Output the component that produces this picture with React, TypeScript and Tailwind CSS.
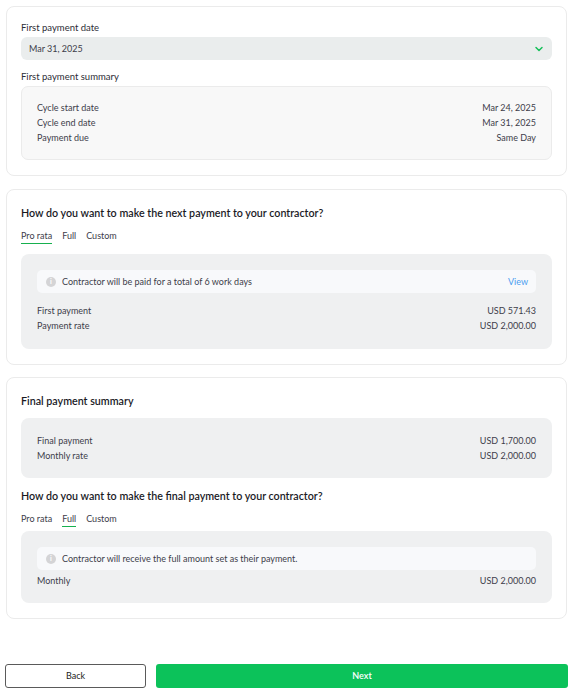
import React from "react";

const font = { fontFamily: "Lato, 'Noto Sans', sans-serif" };

function Row({ label, value }: { label: string; value: string }) {
  return (
    <div className="flex h-[15px] items-center justify-between text-[9px] text-[#3d3d4a]">
      <span>{label}</span>
      <span>{value}</span>
    </div>
  );
}

function InfoIcon() {
  return (
    <span className="flex h-[10px] w-[10px] items-center justify-center rounded-full bg-[#d4d4d6] text-[7px] font-bold leading-none text-white">
      i
    </span>
  );
}

function Tabs({ active }: { active: number }) {
  const tabs = ["Pro rata", "Full", "Custom"];
  return (
    <div className="flex gap-[10px] text-[9px] text-[#3d3d4a]">
      {tabs.map((t, i) => (
        <span
          key={t}
          className={
            i === active
              ? "h-[15px] border-b-[1.5px] border-[#16b04e] leading-[13px]"
              : "h-[15px] border-b-[1.5px] border-transparent leading-[13px]"
          }
        >
          {t}
        </span>
      ))}
    </div>
  );
}

export default function App() {
  return (
    <div className="min-h-[697px] bg-white pb-[9px] pl-[6px] pr-[12px] pt-[6px]" style={font}>
      {/* Card 1 */}
      <div className="rounded-[8px] border border-[#ebebeb] px-[14px] pb-[15px] pt-[14px]">
        <div className="h-[14px] text-[9.5px] leading-[14px] text-[#2d2d36]">First payment date</div>
        <div className="mt-[2px] flex h-[23px] items-center justify-between rounded-[6px] bg-[#eaeded] pl-[8px] pr-[8px] text-[9px] text-[#3d3d4a]">
          <span>Mar 31, 2025</span>
          <svg width="10" height="8" viewBox="0 0 10 8">
            <path d="M2 2.5 L5 5.5 L8 2.5" fill="none" stroke="#16c05a" strokeWidth="1.5" strokeLinecap="round" strokeLinejoin="round" />
          </svg>
        </div>
        <div className="mt-[10px] h-[14px] text-[9.5px] leading-[14px] text-[#2d2d36]">First payment summary</div>
        <div className="mt-[2px] rounded-[7px] border border-[#ebebeb] bg-[#f8f8f8] px-[15px] py-[13.5px]">
          <Row label="Cycle start date" value="Mar 24, 2025" />
          <Row label="Cycle end date" value="Mar 31, 2025" />
          <Row label="Payment due" value="Same Day" />
        </div>
      </div>

      {/* Card 2 */}
      <div className="mt-[13px] rounded-[8px] border border-[#ebebeb] px-[14px] pb-[15px] pt-[15px]">
        <div className="h-[16px] text-[10.7px] font-semibold leading-[16px] text-[#1a1a1f]">
          How do you want to make the next payment to your contractor?
        </div>
        <div className="mt-[8px]">
          <Tabs active={0} />
        </div>
        <div className="mt-[10px] rounded-[8px] bg-[#eff0f1] px-[16px] pb-[16px] pt-[16px]">
          <div className="flex h-[23px] items-center justify-between rounded-[5px] bg-[#f8f9fb] pl-[9px] pr-[8px] text-[9px] text-[#3d3d4a]">
            <div className="flex items-center gap-[6px]">
              <InfoIcon />
              <span>Contractor will be paid for a total of 6 work days</span>
            </div>
            <span className="text-[#4a9df0]">View</span>
          </div>
          <div className="mt-[10px]">
            <Row label="First payment" value="USD 571.43" />
            <Row label="Payment rate" value="USD 2,000.00" />
          </div>
        </div>
      </div>

      {/* Card 3 */}
      <div className="mt-[12px] rounded-[8px] border border-[#ebebeb] px-[14px] pb-[15px] pt-[15px]">
        <div className="h-[16px] text-[10.7px] font-semibold leading-[16px] text-[#1a1a1f]">Final payment summary</div>
        <div className="mt-[9px] rounded-[8px] bg-[#eff0f1] px-[16px] py-[15px]">
          <Row label="Final payment" value="USD 1,700.00" />
          <Row label="Monthly rate" value="USD 2,000.00" />
        </div>
        <div className="mt-[10px] h-[16px] text-[10.7px] font-semibold leading-[16px] text-[#1a1a1f]">
          How do you want to make the final payment to your contractor?
        </div>
        <div className="mt-[8px]">
          <Tabs active={1} />
        </div>
        <div className="mt-[4px] rounded-[8px] bg-[#eff0f1] px-[16px] pb-[15px] pt-[16px]">
          <div className="flex h-[23px] items-center rounded-[5px] bg-[#f8f9fb] pl-[9px] pr-[8px] text-[9px] text-[#3d3d4a]">
            <div className="flex items-center gap-[6px]">
              <InfoIcon />
              <span>Contractor will receive the full amount set as their payment.</span>
            </div>
          </div>
          <div className="mt-[3px]">
            <Row label="Monthly" value="USD 2,000.00" />
          </div>
        </div>
      </div>

      {/* Buttons */}
      <div className="-ml-[1px] mr-[-1px] mt-[45px] flex gap-[10px]">
        <button className="flex h-[24px] w-[141px] items-center justify-center rounded-[3px] border border-[#5a5a5a] bg-white text-[9px] text-[#222]">
          Back
        </button>
        <button className="flex h-[24px] flex-1 items-center justify-center rounded-[3px] bg-[#0cc25a] text-[9px] font-semibold text-white">
          Next
        </button>
      </div>
    </div>
  );
}
